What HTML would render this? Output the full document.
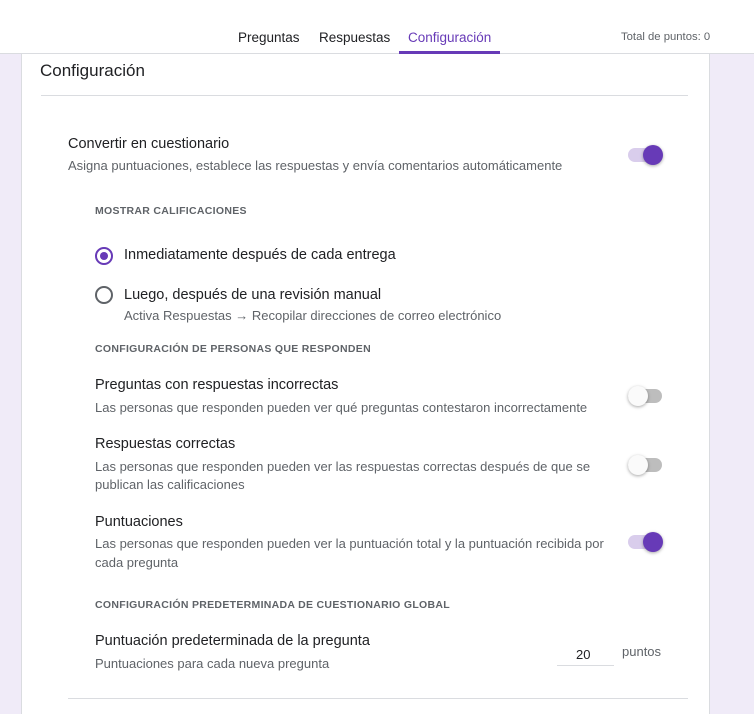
<!DOCTYPE html>
<html><head><meta charset="utf-8"><style>
*{margin:0;padding:0;box-sizing:border-box}
body{width:754px;height:710px;background:#f0ebf8;font-family:"Liberation Sans",sans-serif;position:relative;overflow:hidden;color:#202124}
.a{position:absolute;white-space:nowrap}
.hdr{position:absolute;left:0;top:0;width:754px;height:54px;background:#fff;border-bottom:1px solid #dadce0}
.card{position:absolute;left:21px;top:54px;width:689px;height:660px;background:#fff;border-left:1px solid #dadce0;border-right:1px solid #dadce0}
.t{font-size:14px;color:#202124}
.s{font-size:13px;color:#5f6368}
.h{font-size:10.5px;font-weight:bold;color:#5f6368;letter-spacing:.3px}
.tg{position:absolute;width:34px;height:14px;border-radius:7px}
.tg i{position:absolute;top:-3px;width:20px;height:20px;border-radius:50%;box-shadow:0 1px 3px rgba(0,0,0,.35)}
.on{background:#d9cdec}.on i{right:-1px;background:#673ab7}
.off{background:#bdbdbd}.off i{left:0;background:#fafafa}
.rd{position:absolute;width:18px;height:18px;border:2px solid #5f6368;border-radius:50%}
.rd.sel{border-color:#673ab7}.rd.sel:after{content:"";position:absolute;left:3px;top:3px;width:8px;height:8px;border-radius:50%;background:#673ab7}
.ln{position:absolute;height:1px;background:#dadce0}
</style></head><body>
<div class="hdr">
<div class="a t" style="left:238px;top:30px;font-size:13.5px">Preguntas</div>
<div class="a t" style="left:319px;top:30px;font-size:13.5px">Respuestas</div>
<div class="a t" style="left:408px;top:30px;font-size:13.5px;color:#673ab7">Configuración</div>
<div style="position:absolute;left:399px;top:51px;width:101px;height:3px;background:#673ab7"></div>
<div class="a" style="left:621px;top:31px;font-size:11.3px;color:#5f6368">Total de puntos: 0</div>
</div>
<div class="card"></div>
<div class="a" style="left:40px;top:61px;font-size:17px;color:#202124">Configuración</div>
<div class="ln" style="left:41px;top:95px;width:647px"></div>
<div class="a t" style="left:68px;top:136px;font-size:14.5px">Convertir en cuestionario</div>
<div class="a s" style="left:68px;top:158px">Asigna puntuaciones, establece las respuestas y envía comentarios automáticamente</div>
<div class="tg on" style="left:628px;top:148px"><i></i></div>
<div class="a h" style="left:95px;top:205px">MOSTRAR CALIFICACIONES</div>
<div class="rd sel" style="left:95px;top:247px"></div>
<div class="a t" style="left:124px;top:247px;font-size:14.5px">Inmediatamente después de cada entrega</div>
<div class="rd" style="left:95px;top:286px"></div>
<div class="a t" style="left:124px;top:287px;font-size:14.5px">Luego, después de una revisión manual</div>
<div class="a s" style="left:124px;top:308px">Activa Respuestas → Recopilar direcciones de correo electrónico</div>
<div class="a h" style="left:95px;top:343px">CONFIGURACIÓN DE PERSONAS QUE RESPONDEN</div>
<div class="a t" style="left:95px;top:377px;font-size:14.5px">Preguntas con respuestas incorrectas</div>
<div class="a s" style="left:95px;top:400px">Las personas que responden pueden ver qué preguntas contestaron incorrectamente</div>
<div class="tg off" style="left:628px;top:389px"><i></i></div>
<div class="a t" style="left:95px;top:436px;font-size:14.5px">Respuestas correctas</div>
<div class="a s" style="left:95px;top:459px">Las personas que responden pueden ver las respuestas correctas después de que se</div>
<div class="a s" style="left:95px;top:477px">publican las calificaciones</div>
<div class="tg off" style="left:628px;top:458px"><i></i></div>
<div class="a t" style="left:95px;top:514px;font-size:14.5px">Puntuaciones</div>
<div class="a s" style="left:95px;top:536px">Las personas que responden pueden ver la puntuación total y la puntuación recibida por</div>
<div class="a s" style="left:95px;top:555px">cada pregunta</div>
<div class="tg on" style="left:628px;top:535px"><i></i></div>
<div class="a h" style="left:95px;top:599px">CONFIGURACIÓN PREDETERMINADA DE CUESTIONARIO GLOBAL</div>
<div class="a t" style="left:95px;top:633px;font-size:14.5px">Puntuación predeterminada de la pregunta</div>
<div class="a s" style="left:95px;top:656px">Puntuaciones para cada nueva pregunta</div>
<div class="a" style="left:576px;top:647px;font-size:13px;color:#202124">20</div>
<div class="ln" style="left:557px;top:665px;width:57px"></div>
<div class="a" style="left:622px;top:644px;font-size:13px;color:#5f6368">puntos</div>
<div class="ln" style="left:68px;top:698px;width:620px"></div>
</body></html>
